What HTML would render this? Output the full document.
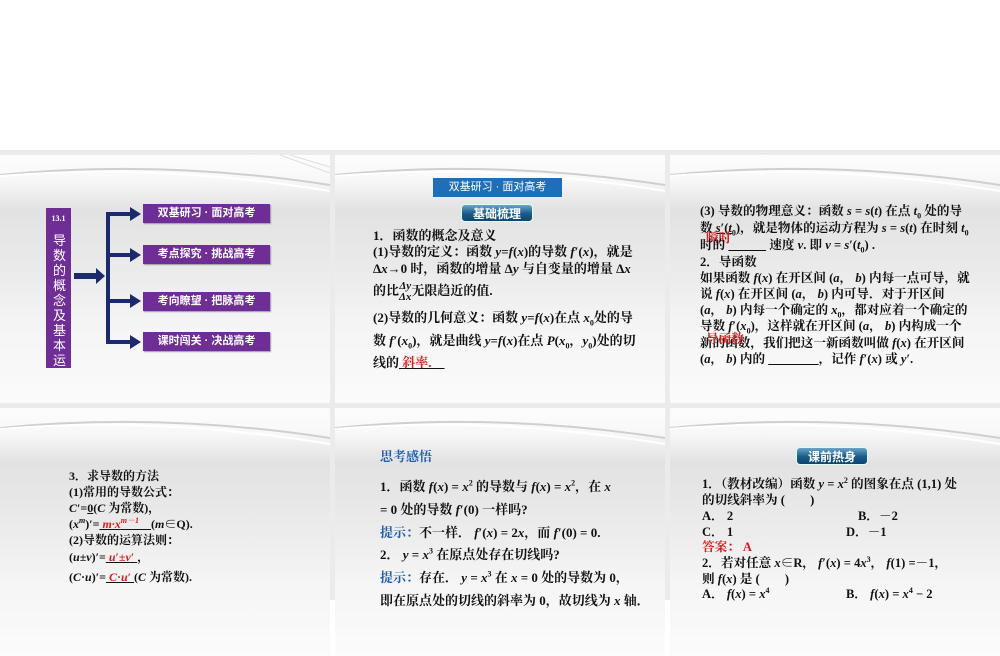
<!DOCTYPE html>
<html><head><meta charset="utf-8"><style>
*{margin:0;padding:0;box-sizing:border-box}
body{width:1000px;height:600px;background:#fff;position:relative;overflow:hidden;font-family:"Liberation Serif","Noto Serif CJK SC",serif;font-weight:bold;color:#111}
.bg{position:absolute;left:0;top:150px;width:1000px;height:450px;background:#ebebeb}
.s{position:absolute;width:330px;height:248px;overflow:hidden;background:linear-gradient(#fdfdfd 0,#f8f8f8 10%,#e2e2e2 22%,#eaeaea 45%,#f5f5f5 70%,#fbfbfb 100%)}
.s svg.sw{position:absolute;left:0;top:0}
.t{position:absolute;font-size:12px;white-space:nowrap;line-height:16px}
.m .t{font-size:13px}
.k .t{font-size:12.6px}
.r{color:#d42020}
.b{color:#1f5fb0}
.u{text-decoration:underline}
.pb{position:absolute;background:#6f2d96;color:#fff;font-family:"Liberation Sans","Noto Sans CJK SC",sans-serif;font-size:11px;font-weight:bold;text-align:center;line-height:19px;height:19px;width:127px;left:143px;box-shadow:1px 1px 1px #999}
.pill{position:absolute;width:72px;height:18px;border-radius:4px;background:linear-gradient(#6aa6c8,#1a5a8a 55%,#0f4470);color:#fff;font-family:"Liberation Sans","Noto Sans CJK SC",sans-serif;font-size:12px;text-align:center;line-height:18px;border:1px solid #dfe;}
i{font-style:italic}
sub,sup{font-size:8px;line-height:0}
</style></head><body>
<div class="bg"></div>

<!-- slide 1 -->
<div class="s" style="left:0;top:155px">
<svg class="sw" width="330" height="60"><path d="M0 20 Q160 4 330 30" stroke="#cfcfcf" stroke-width="2" fill="none"/><path d="M0 21 Q160 8 330 36" stroke="#fff" stroke-width="2" fill="none"/><path d="M290 0 L330 12 M280 0 L330 18" stroke="#ddd" fill="none"/></svg>
<div style="position:absolute;left:46px;top:53px;width:25px;height:160px;background:#6f2d96;color:#fff;text-align:center;font-size:8px;padding-top:6px">13.1<div style="font-family:'Liberation Sans','Noto Sans CJK SC',sans-serif;font-size:13px;line-height:15px;margin-top:10px;font-weight:normal;width:13px;margin-left:7px">导数的概念及基本运</div></div>
<svg style="position:absolute;left:0;top:0" width="330" height="248">
<g fill="#1b2a6b">
<rect x="74" y="118" width="22" height="6"/><polygon points="96,113 105,121 96,129"/>
<rect x="106" y="57" width="4" height="132"/>
<rect x="106" y="57" width="28" height="4"/><polygon points="130,52 141,59 130,66"/>
<rect x="106" y="98" width="28" height="4"/><polygon points="130,93 141,100 130,107"/>
<rect x="106" y="144" width="28" height="4"/><polygon points="130,139 141,146 130,153"/>
<rect x="106" y="185" width="28" height="4"/><polygon points="130,180 141,187 130,194"/>
</g></svg>
<div class="pb" style="top:49px">双基研习 · 面对高考</div>
<div class="pb" style="top:90px">考点探究 · 挑战高考</div>
<div class="pb" style="top:137px">考向瞭望 · 把脉高考</div>
<div class="pb" style="top:177px">课时闯关 · 决战高考</div>
</div>

<!-- slide 2 -->
<div class="s m" style="left:335px;top:155px">
<svg class="sw" width="330" height="60"><path d="M0 20 Q160 4 330 30" stroke="#cfcfcf" stroke-width="2" fill="none"/><path d="M0 21 Q160 8 330 36" stroke="#fff" stroke-width="2" fill="none"/></svg>
<div style="position:absolute;left:98px;top:23px;width:129px;height:19px;background:#1f6fb8;color:#fff;font-family:'Liberation Sans','Noto Sans CJK SC',sans-serif;font-size:11px;text-align:center;line-height:19px;font-weight:normal">双基研习 · 面对高考</div>
<div class="pill" style="left:126px;top:49px">基础梳理</div>
<div class="t" style="left:38px;top:73px">1．函数的概念及意义</div>
<div class="t" style="left:38px;top:89px">(1)导数的定义：函数 <i>y</i>=<i>f</i>(<i>x</i>)的导数 <i>f</i>′(<i>x</i>)，就是</div>
<div class="t" style="left:38px;top:106px">Δ<i>x</i>→0 时，函数的增量 Δ<i>y</i> 与自变量的增量 Δ<i>x</i></div>
<div class="t" style="left:38px;top:126px">的比<span style="display:inline-block;vertical-align:middle;text-align:center;line-height:11px;font-size:11px"><i>Δy</i><br><i>Δx</i></span>无限趋近的值.</div>
<div class="t" style="left:38px;top:155px">(2)导数的几何意义：函数 <i>y</i>=<i>f</i>(<i>x</i>)在点 <i>x</i><sub>0</sub>处的导</div>
<div class="t" style="left:38px;top:178px">数 <i>f</i>′(<i>x</i><sub>0</sub>)，就是曲线 <i>y</i>=<i>f</i>(<i>x</i>)在点 <i>P</i>(<i>x</i><sub>0</sub>，<i>y</i><sub>0</sub>)处的切</div>
<div class="t" style="left:38px;top:200px">线的<span class="u"> <span class="r">斜率.</span>　</span></div>
</div>

<!-- slide 3 -->
<div class="s k" style="left:670px;top:155px">
<svg class="sw" width="330" height="60"><path d="M0 20 Q160 4 330 30" stroke="#cfcfcf" stroke-width="2" fill="none"/><path d="M0 21 Q160 8 330 36" stroke="#fff" stroke-width="2" fill="none"/></svg>
<div class="t" style="left:30px;top:48px">(3) 导数的物理意义：函数 <i>s</i> = <i>s</i>(<i>t</i>) 在点 <i>t</i><sub>0</sub> 处的导</div>
<div class="t" style="left:30px;top:65px">数 <span class="u"><i>s</i>′(<i>t</i><sub>0</sub>)</span>，就是物体的运动方程为 <i>s</i> = <i>s</i>(<i>t</i>) 在时刻 <i>t</i><sub>0</sub></div>
<div class="t r" style="left:36px;top:75px">瞬时</div>
<div class="t" style="left:30px;top:82px">时的 <span class="u">　　　</span> 速度 <i>v</i>. 即 <i>v</i> = <i>s</i>′(<i>t</i><sub>0</sub>) .</div>
<div class="t" style="left:30px;top:99px">2．导函数</div>
<div class="t" style="left:30px;top:115px">如果函数 <i>f</i>(<i>x</i>) 在开区间 (<i>a</i>， <i>b</i>) 内每一点可导，就</div>
<div class="t" style="left:30px;top:131px">说 <i>f</i>(<i>x</i>) 在开区间 (<i>a</i>， <i>b</i>) 内可导．对于开区间</div>
<div class="t" style="left:30px;top:147px">(<i>a</i>， <i>b</i>) 内每一个确定的 <i>x</i><sub>0</sub>，都对应着一个确定的</div>
<div class="t" style="left:30px;top:163px">导数 <i>f</i>′(<i>x</i><sub>0</sub>)，这样就在开区间 (<i>a</i>， <i>b</i>) 内构成一个</div>
<div class="t" style="left:30px;top:180px">新的函数，我们把这一新函数叫做 <i>f</i>(<i>x</i>) 在开区间</div>
<div class="t r" style="left:36px;top:176px">导函数</div>
<div class="t" style="left:30px;top:196px">(<i>a</i>， <i>b</i>) 内的 <span class="u">　　　　</span>，记作 <i>f</i>′(<i>x</i>) 或 <i>y</i>′.</div>
</div>

<!-- slide 4 -->
<div class="s" style="left:0;top:408px">
<svg class="sw" width="330" height="60"><path d="M0 20 Q160 4 330 30" stroke="#cfcfcf" stroke-width="2" fill="none"/><path d="M0 21 Q160 8 330 36" stroke="#fff" stroke-width="2" fill="none"/></svg>
<div class="t" style="left:69px;top:60px">3．求导数的方法</div>
<div class="t" style="left:69px;top:76px">(1)常用的导数公式：</div>
<div class="t" style="left:69px;top:92px"><i>C</i>′=<span class="u">0</span>(<i>C</i> 为常数)，</div>
<div class="t" style="left:69px;top:108px">(<i>x<sup>m</sup></i>)′=<span class="u"> <span class="r"><i>m·x<sup>m－1</sup></i></span>　</span>(<i>m</i>∈Q).</div>
<div class="t" style="left:69px;top:124px">(2)导数的运算法则：</div>
<div class="t" style="left:69px;top:141px">(<i>u</i>±<i>v</i>)′=<span class="u"> <span class="r"><i>u</i>′±<i>v</i>′</span> </span>，</div>
<div class="t" style="left:69px;top:161px">(<i>C</i>·<i>u</i>)′=<span class="u"> <span class="r"><i>C</i>·<i>u</i>′</span> </span>(<i>C</i> 为常数).</div>
</div>

<!-- slide 5 -->
<div class="s m" style="left:335px;top:408px">
<svg class="sw" width="330" height="60"><path d="M0 20 Q160 4 330 30" stroke="#cfcfcf" stroke-width="2" fill="none"/><path d="M0 21 Q160 8 330 36" stroke="#fff" stroke-width="2" fill="none"/></svg>
<div class="t b" style="left:45px;top:41px">思考感悟</div>
<div class="t" style="left:45px;top:71px">1．函数 <i>f</i>(<i>x</i>) = <i>x</i><sup>2</sup> 的导数与 <i>f</i>(<i>x</i>) = <i>x</i><sup>2</sup>，在 <i>x</i></div>
<div class="t" style="left:45px;top:94px">= 0 处的导数 <i>f</i>′(0) 一样吗?</div>
<div class="t" style="left:45px;top:117px"><span class="b">提示：</span>不一样． <i>f</i>′(<i>x</i>) = 2<i>x</i>，而 <i>f</i>′(0) = 0.</div>
<div class="t" style="left:45px;top:139px">2． <i>y</i> = <i>x</i><sup>3</sup> 在原点处存在切线吗?</div>
<div class="t" style="left:45px;top:162px"><span class="b">提示：</span>存在． <i>y</i> = <i>x</i><sup>3</sup> 在 <i>x</i> = 0 处的导数为 0，</div>
<div class="t" style="left:45px;top:185px">即在原点处的切线的斜率为 0，故切线为 <i>x</i> 轴．</div>
</div>

<!-- slide 6 -->
<div class="s k" style="left:670px;top:408px">
<svg class="sw" width="330" height="60"><path d="M0 20 Q160 4 330 30" stroke="#cfcfcf" stroke-width="2" fill="none"/><path d="M0 21 Q160 8 330 36" stroke="#fff" stroke-width="2" fill="none"/></svg>
<div class="pill" style="left:126px;top:39px">课前热身</div>
<div class="t" style="left:32px;top:68px">1．（教材改编）函数 <i>y</i> = <i>x</i><sup>2</sup> 的图象在点 (1,1) 处</div>
<div class="t" style="left:32px;top:84px">的切线斜率为 (　　)</div>
<div class="t" style="left:32px;top:100px">A． 2</div><div class="t" style="left:188px;top:100px">B．－2</div>
<div class="t" style="left:32px;top:116px">C． 1</div><div class="t" style="left:176px;top:116px">D．－1</div>
<div class="t r" style="left:32px;top:131px">答案： A</div>
<div class="t" style="left:32px;top:147px">2．若对任意 <i>x</i>∈R， <i>f</i>′(<i>x</i>) = 4<i>x</i><sup>3</sup>， <i>f</i>(1) =－1，</div>
<div class="t" style="left:32px;top:163px">则 <i>f</i>(<i>x</i>) 是 (　　)</div>
<div class="t" style="left:32px;top:178px">A． <i>f</i>(<i>x</i>) = <i>x</i><sup>4</sup></div><div class="t" style="left:176px;top:178px">B． <i>f</i>(<i>x</i>) = <i>x</i><sup>4</sup> − 2</div>
</div>
</body></html>
